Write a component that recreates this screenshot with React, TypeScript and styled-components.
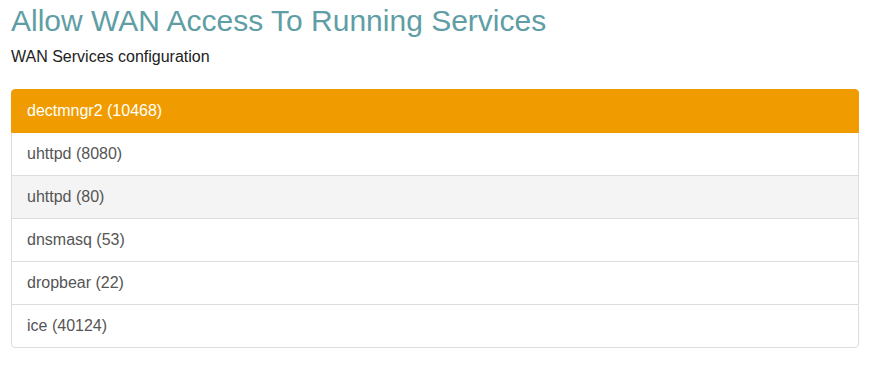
import styled, { createGlobalStyle } from "styled-components";

const GlobalStyle = createGlobalStyle`
  body {
    margin: 0;
    background: #fff;
    font-family: "Liberation Sans", Arial, sans-serif;
    color: #333;
  }
`;

const Page = styled.div`
  padding: 4px 15px 0 11px;
`;

const Title = styled.h1`
  margin: 0;
  font-size: 30px;
  line-height: 33px;
  font-weight: 400;
  color: #5f9ea5;
`;

const Subtitle = styled.p`
  margin: 10px 0 22px;
  font-size: 16px;
  line-height: 20px;
  color: #222;
`;

const ListGroup = styled.div`
  display: flex;
  flex-direction: column;
`;

const Item = styled.div<{ $active?: boolean; $striped?: boolean }>`
  padding: 10px 15px;
  margin-bottom: -1px;
  font-size: 16px;
  line-height: 22px;
  border: 1px solid ${(p) => (p.$active ? "#f09c00" : "#ddd")};
  background: ${(p) => (p.$active ? "#f09c00" : p.$striped ? "#f4f4f4" : "#fff")};
  color: ${(p) => (p.$active ? "#fff" : "#555")};
  position: relative;
  z-index: ${(p) => (p.$active ? 2 : 1)};

  &:first-child {
    border-top-left-radius: 4px;
    border-top-right-radius: 4px;
  }
  &:last-child {
    margin-bottom: 0;
    border-bottom-left-radius: 4px;
    border-bottom-right-radius: 4px;
  }
`;

const services = [
  "dectmngr2 (10468)",
  "uhttpd (8080)",
  "uhttpd (80)",
  "dnsmasq (53)",
  "dropbear (22)",
  "ice (40124)",
];

export default function App() {
  return (
    <>
      <GlobalStyle />
      <Page>
        <Title>Allow WAN Access To Running Services</Title>
        <Subtitle>WAN Services configuration</Subtitle>
        <ListGroup>
          {services.map((s, i) => (
            <Item key={s} $active={i === 0} $striped={i === 2}>
              {s}
            </Item>
          ))}
        </ListGroup>
      </Page>
    </>
  );
}
